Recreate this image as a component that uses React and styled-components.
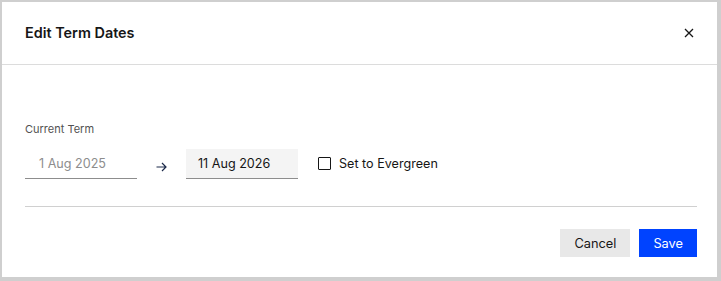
import React, { useState } from "react";
import styled, { createGlobalStyle } from "styled-components";

const GlobalStyle = createGlobalStyle`
  html, body {
    margin: 0;
    padding: 0;
    background: #cfcfcf;
  }
  body {
    font-family: Inter, "Noto Sans", Arial, sans-serif;
    color: #161616;
  }
`;

const Frame = styled.div`
  width: 721px;
  height: 281px;
  box-sizing: border-box;
  padding: 2px 4px 4px 2px;
`;

const Modal = styled.div`
  width: 100%;
  height: 100%;
  background: #ffffff;
  display: flex;
  flex-direction: column;
`;

const Header = styled.header`
  height: 63px;
  box-sizing: border-box;
  display: flex;
  align-items: center;
  justify-content: space-between;
  padding: 0 20px 1px 23px;
  border-bottom: 1px solid #dcdcdc;
`;

const Title = styled.h2`
  margin: 0;
  font-size: 14.4px;
  font-weight: 600;
  color: #161616;
`;

const CloseButton = styled.button`
  border: 0;
  background: none;
  padding: 0;
  width: 16px;
  height: 16px;
  display: flex;
  align-items: center;
  justify-content: center;
  cursor: pointer;
  color: #161616;
`;

const Body = styled.div`
  padding: 57px 20px 0 23px;
  flex: 1;
  display: flex;
  flex-direction: column;
`;

const Label = styled.div`
  font-size: 11px;
  color: #525252;
  margin-bottom: 13px;
`;

const Row = styled.div`
  display: flex;
  align-items: center;
  padding-bottom: 27px;
  border-bottom: 1px solid #d0d0d0;
`;

const DateField = styled.div`
  width: 112px;
  height: 30px;
  box-sizing: border-box;
  display: flex;
  align-items: center;
  padding: 0 0 1px ${p => (p.$filled ? "12px" : "14px")};
  font-size: 12.6px;
  color: ${p => (p.$filled ? "#161616" : "#8d8d8d")};
  background: ${p => (p.$filled ? "#f4f4f4" : "transparent")};
  border-bottom: 1px solid #8d8d8d;
`;

const Arrow = styled.div`
  width: 49px;
  display: flex;
  justify-content: center;
  padding-top: 5px;
  color: #1c2a4a;
`;

const CheckLabel = styled.label`
  display: flex;
  align-items: center;
  gap: 8px;
  margin: 0 0 2px 20px;
  font-size: 12.6px;
  color: #161616;
  cursor: pointer;
`;

const Box = styled.span`
  width: 11px;
  height: 11px;
  border: 1px solid #161616;
  border-radius: 1px;
  background: ${p => (p.$checked ? "#161616" : "#fff")};
`;

const Footer = styled.div`
  display: flex;
  justify-content: flex-end;
  gap: 9px;
  padding-top: 22px;
`;

const Button = styled.button`
  height: 28px;
  border: 0;
  padding: 0 14px;
  font-family: inherit;
  font-size: 12.8px;
  cursor: pointer;
  background: ${p => (p.$primary ? "#0043ff" : "#e8e8e8")};
  color: ${p => (p.$primary ? "#ffffff" : "#161616")};
`;

export default function App() {
  const [evergreen, setEvergreen] = useState(false);
  return (
    <>
      <GlobalStyle />
      <Frame>
        <Modal>
          <Header>
            <Title>Edit Term Dates</Title>
            <CloseButton aria-label="Close">
              <svg width="10" height="10" viewBox="0 0 10 10">
                <path d="M1 1L9 9M9 1L1 9" stroke="currentColor" strokeWidth="1.3" />
              </svg>
            </CloseButton>
          </Header>
          <Body>
            <Label>Current Term</Label>
            <Row>
              <DateField>1 Aug 2025</DateField>
              <Arrow>
                <svg width="11" height="10" viewBox="0 0 11 10">
                  <path d="M0.5 5H10M6 1L10 5L6 9" fill="none" stroke="currentColor" strokeWidth="1.2" />
                </svg>
              </Arrow>
              <DateField $filled>11 Aug 2026</DateField>
              <CheckLabel onClick={() => setEvergreen(!evergreen)}>
                <Box $checked={evergreen} />
                Set to Evergreen
              </CheckLabel>
            </Row>
            <Footer>
              <Button>Cancel</Button>
              <Button $primary>Save</Button>
            </Footer>
          </Body>
        </Modal>
      </Frame>
    </>
  );
}
